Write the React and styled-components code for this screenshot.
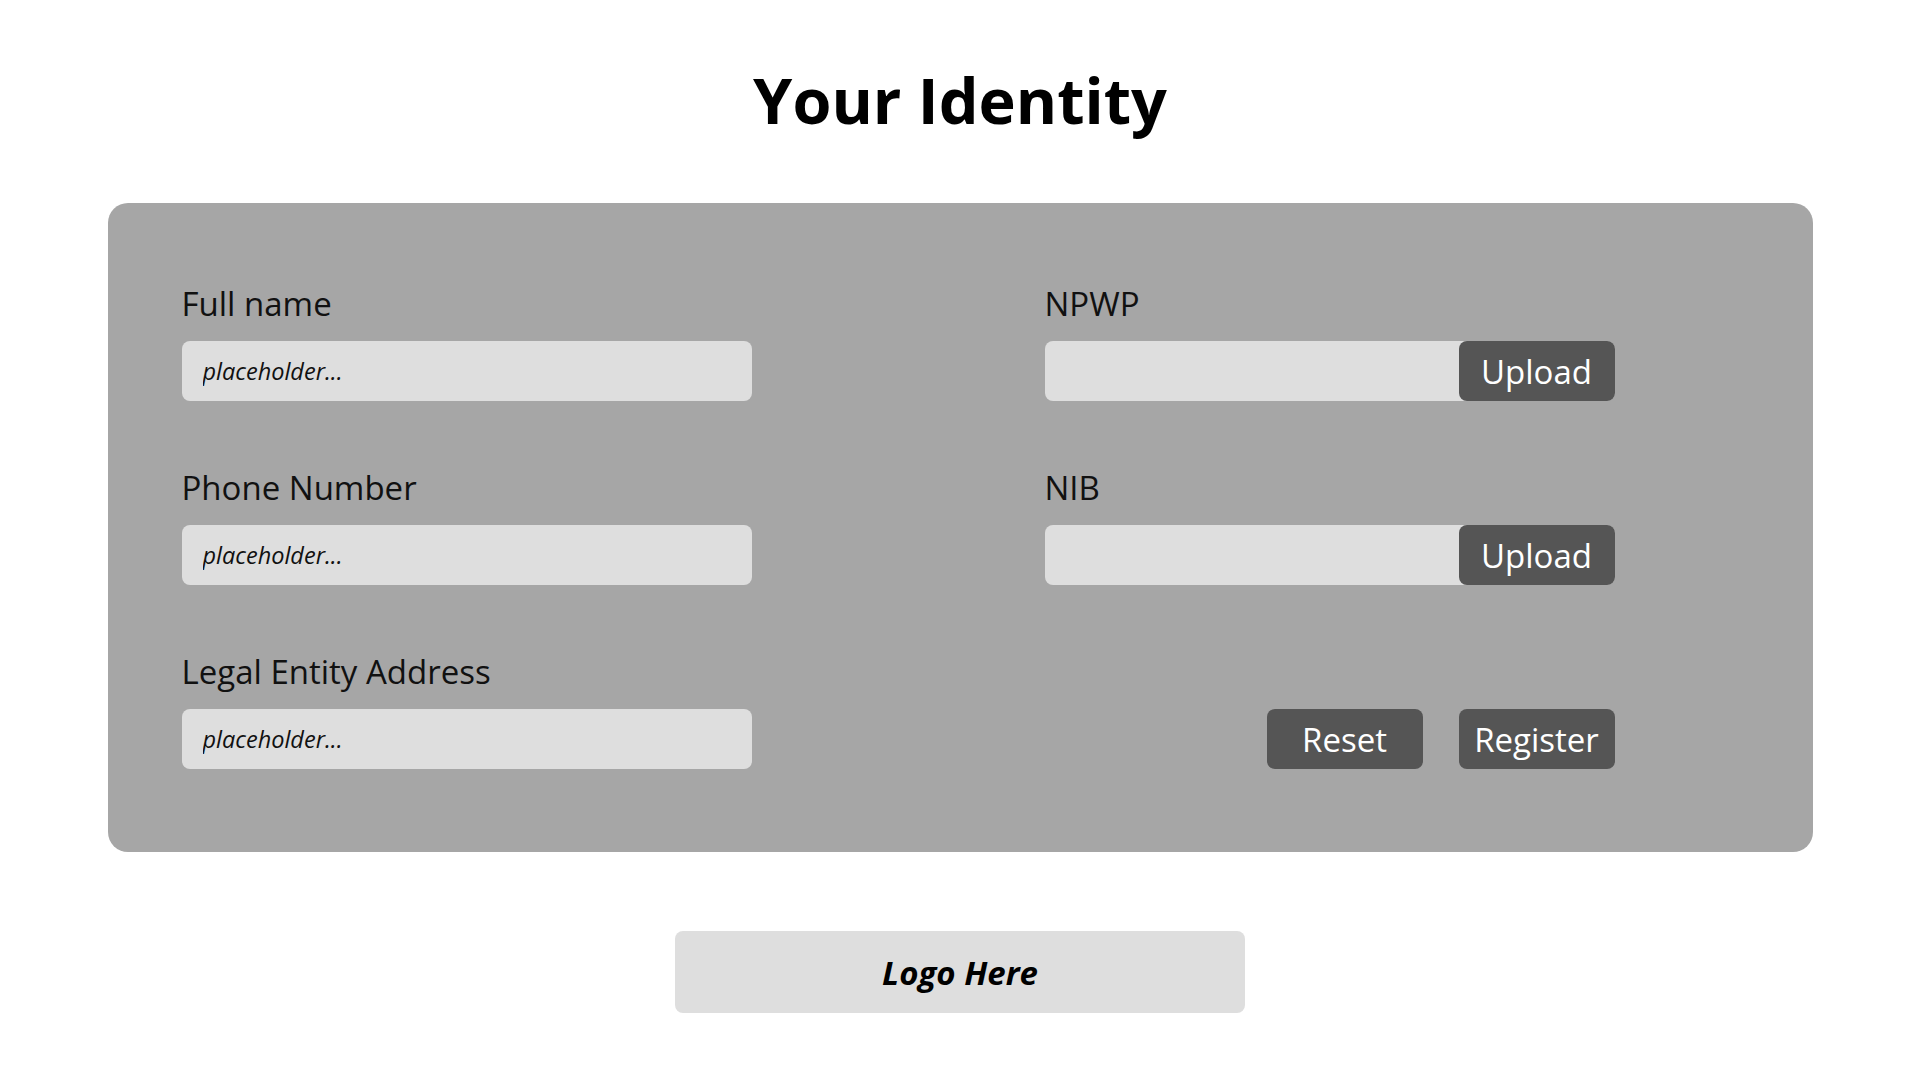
import React from 'react'
import styled, { createGlobalStyle } from 'styled-components'

const GlobalStyle = createGlobalStyle`
    body {
        margin: 0;
        background: #ffffff;
        font-family: "Open Sans", "Liberation Sans", sans-serif;
        color: #111111;
    }
`

const Page = styled.div`
    width: 1920px;
    min-height: 1080px;
    display: flex;
    flex-direction: column;
    align-items: center;
`

const Title = styled.h1`
    margin: 56px 0 0 0;
    font-size: 63px;
    line-height: 87px;
    font-weight: 700;
    color: #000000;
`

const Panel = styled.div`
    margin-top: 60px;
    width: 1705px;
    box-sizing: border-box;
    padding: 79px 0 83px 74px;
    background-color: #a6a6a6;
    border-radius: 20px;
    display: grid;
    grid-template-columns: 570px 570px;
    column-gap: 293px;
    row-gap: 65px;
`

const Field = styled.div`
    display: flex;
    flex-direction: column;
    justify-content: flex-end;
`

const Label = styled.label`
    font-size: 33px;
    line-height: 44px;
    margin-bottom: 15px;
    color: #111111;
`

const TextInput = styled.input`
    box-sizing: border-box;
    width: 570px;
    height: 60px;
    border: none;
    outline: none;
    border-radius: 8px;
    background-color: #dedede;
    padding: 0 21px;
    font-family: inherit;
    font-size: 23.5px;
    font-style: italic;
    color: #111111;

    &::placeholder {
        color: #111111;
        font-style: italic;
    }
`

const FileBox = styled.div`
    width: 570px;
    height: 60px;
    border-radius: 8px;
    background-color: #dedede;
    display: flex;
    justify-content: flex-end;
`

const DarkButton = styled.button`
    width: 156px;
    height: 60px;
    border: none;
    border-radius: 8px;
    background-color: #555555;
    color: #ffffff;
    font-family: inherit;
    font-size: 33px;
    padding: 0;
    cursor: pointer;
`

const Actions = styled.div`
    display: flex;
    justify-content: flex-end;
    align-items: flex-end;
    gap: 36px;
`

const LogoBox = styled.div`
    margin-top: 79px;
    width: 570px;
    height: 82px;
    border-radius: 8px;
    background-color: #dedede;
    display: flex;
    align-items: center;
    justify-content: center;
    font-size: 33px;
    font-weight: 700;
    font-style: italic;
    color: #000000;
`

function App() {
    return (
        <Page>
            <GlobalStyle />
            <Title>Your Identity</Title>
            <Panel>
                <Field>
                    <Label>Full name</Label>
                    <TextInput placeholder="placeholder..." />
                </Field>
                <Field>
                    <Label>NPWP</Label>
                    <FileBox>
                        <DarkButton>Upload</DarkButton>
                    </FileBox>
                </Field>
                <Field>
                    <Label>Phone Number</Label>
                    <TextInput placeholder="placeholder..." />
                </Field>
                <Field>
                    <Label>NIB</Label>
                    <FileBox>
                        <DarkButton>Upload</DarkButton>
                    </FileBox>
                </Field>
                <Field>
                    <Label>Legal Entity Address</Label>
                    <TextInput placeholder="placeholder..." />
                </Field>
                <Actions>
                    <DarkButton>Reset</DarkButton>
                    <DarkButton>Register</DarkButton>
                </Actions>
            </Panel>
            <LogoBox>Logo Here</LogoBox>
        </Page>
    )
}

export default App
